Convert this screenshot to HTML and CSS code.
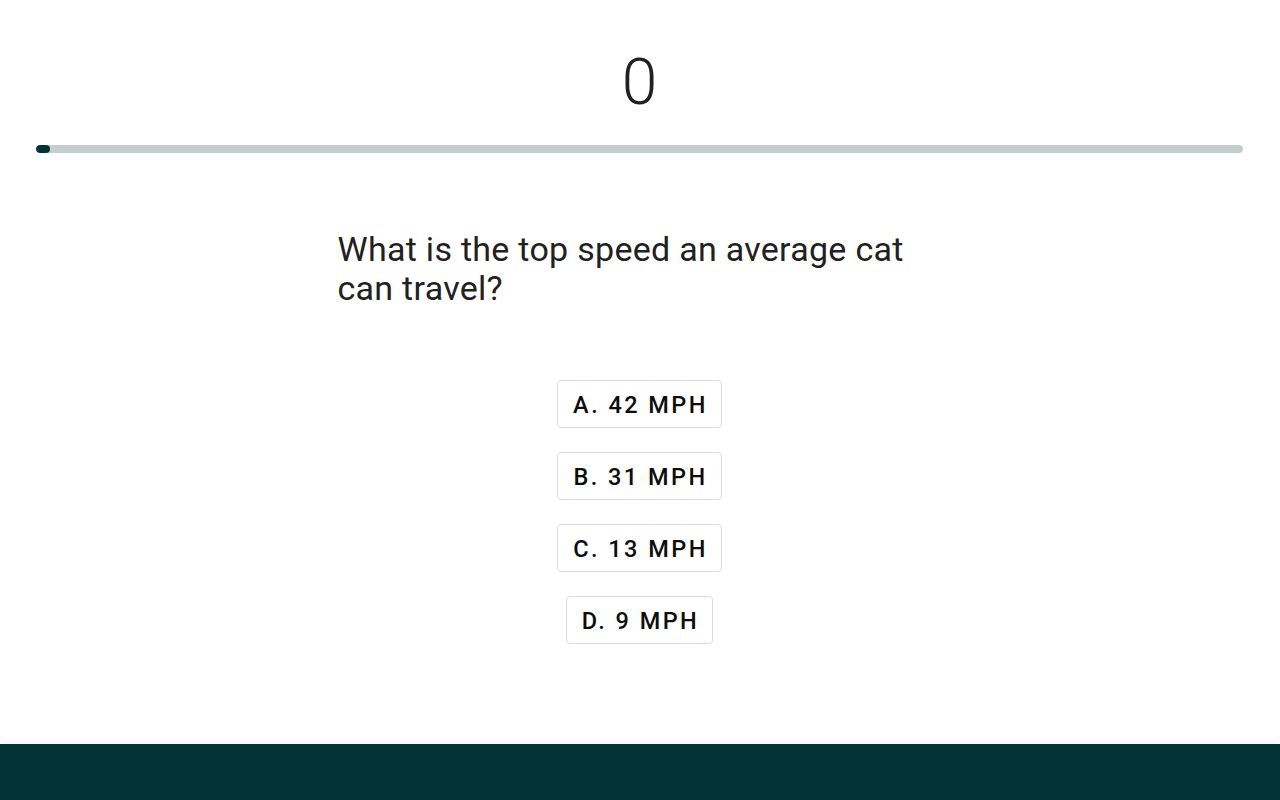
FILE: index.html
```html
<!DOCTYPE html>
<html lang="en">
<head>
<meta charset="utf-8">
<title>Cat Quiz</title>
<link rel="stylesheet" href="styles.css">
</head>
<body>
<main class="quiz">
  <div class="score">0</div>
  <div class="progress"><div class="progress-fill" style="width: 1.2%"></div></div>
  <section class="question-wrap">
    <h1 class="question">What is the top speed an average cat can travel?</h1>
  </section>
  <div class="answers">
    <button class="answer">A. 42 MPH</button>
    <button class="answer">B. 31 MPH</button>
    <button class="answer">C. 13 MPH</button>
    <button class="answer">D. 9 MPH</button>
  </div>
</main>
<footer class="footer"></footer>
</body>
</html>
```
FILE: styles.css
```css
html, body {
  margin: 0;
  padding: 0;
  height: 100%;
}
body {
  font-family: Roboto, "Liberation Sans", sans-serif;
  background: #fff;
  color: #212121;
  display: flex;
  flex-direction: column;
  min-height: 100vh;
}
.quiz {
  flex: 1;
  display: flex;
  flex-direction: column;
  align-items: center;
  padding: 0 37px 0 36px;
}
.score {
  margin-top: 47px;
  font-size: 64px;
  font-weight: 300;
  line-height: 72px;
  color: #212121;
}
.progress {
  align-self: stretch;
  margin-top: 26px;
  height: 8px;
  border-radius: 4px;
  background: #c3cecd;
  overflow: hidden;
}
.progress-fill {
  height: 100%;
  background: #023334;
  border-radius: 4px;
}
.question-wrap {
  width: 604px;
  margin-top: 77px;
}
.question {
  margin: 0;
  font-size: 34px;
  font-weight: 400;
  line-height: 39px;
  letter-spacing: 0.28px;
  color: #212121;
}
.answers {
  margin-top: 72px;
  display: flex;
  flex-direction: column;
  align-items: center;
  gap: 24px;
}
.answer {
  font-family: Roboto, "Liberation Sans", sans-serif;
  font-size: 23.5px;
  font-weight: 500;
  letter-spacing: 2.45px;
  color: #0d0d0d;
  background: #fff;
  border: 1px solid #dcdcdc;
  border-radius: 4px;
  height: 48px;
  padding: 1px 13px 0 15px;
}
.footer {
  height: 56px;
  background: #023334;
  box-shadow: 0 -4px 8px rgba(0,0,0,0.04);
}
```
